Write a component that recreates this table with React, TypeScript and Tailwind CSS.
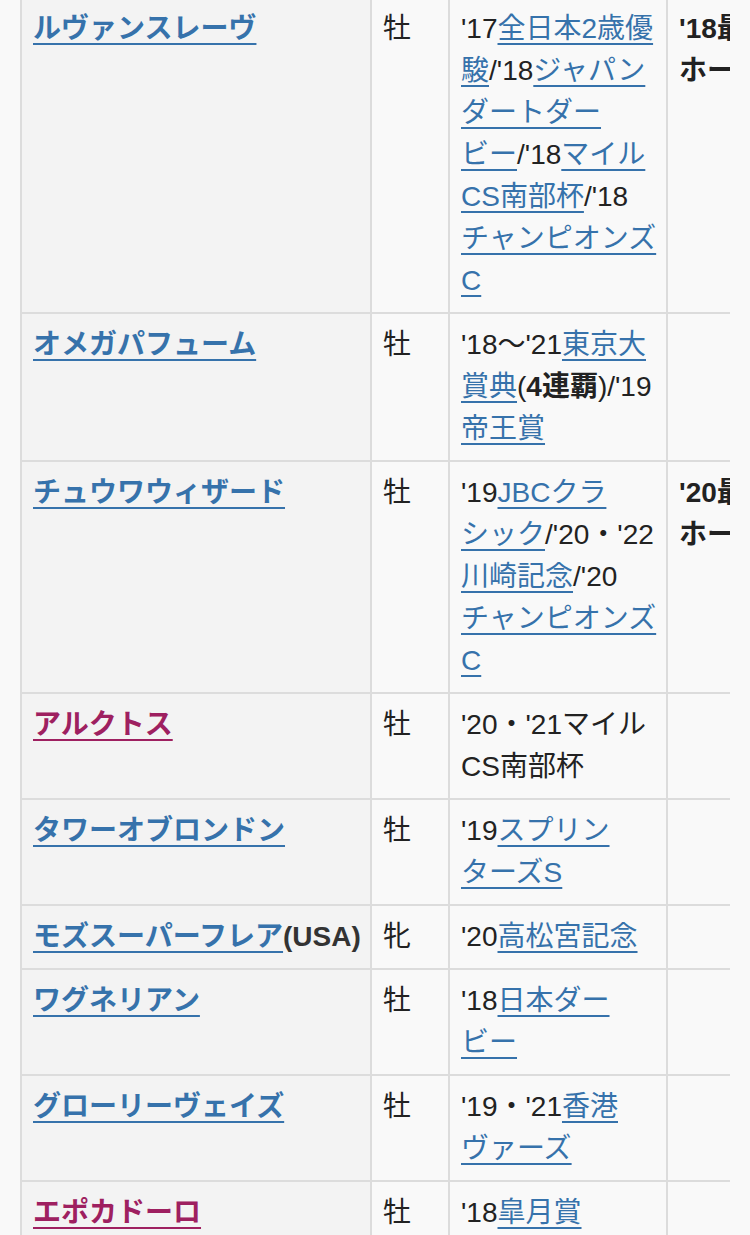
import React from "react";

type Seg = string | { l: string } | { b: string };
type Row = {
    name: string;
    red?: boolean;
    suffix?: string;
    sex: string;
    wins: Seg[][];
    award?: string[];
};

const rows: Row[] = [
    {
        name: "ルヴァンスレーヴ",
        sex: "牡",
        wins: [
            ["'17", { l: "全日本2歳優" }],
            [{ l: "駿" }, "/'18", { l: "ジャパン" }],
            [{ l: "ダートダー" }],
            [{ l: "ビー" }, "/'18", { l: "マイル" }],
            [{ l: "CS南部杯" }, "/'18"],
            [{ l: "チャンピオンズ" }],
            [{ l: "C" }],
        ],
        award: ["'18最優秀ダート", "ホース"],
    },
    {
        name: "オメガパフューム",
        sex: "牡",
        wins: [
            ["'18～'21", { l: "東京大" }],
            [{ l: "賞典" }, "(", { b: "4連覇" }, ")/'19"],
            [{ l: "帝王賞" }],
        ],
    },
    {
        name: "チュウワウィザード",
        sex: "牡",
        wins: [
            ["'19", { l: "JBCクラ" }],
            [{ l: "シック" }, "/'20・'22"],
            [{ l: "川崎記念" }, "/'20"],
            [{ l: "チャンピオンズ" }],
            [{ l: "C" }],
        ],
        award: ["'20最優秀ダート", "ホース"],
    },
    {
        name: "アルクトス",
        red: true,
        sex: "牡",
        wins: [["'20・'21マイル"], ["CS南部杯"]],
    },
    {
        name: "タワーオブロンドン",
        sex: "牡",
        wins: [["'19", { l: "スプリン" }], [{ l: "ターズS" }]],
    },
    {
        name: "モズスーパーフレア",
        suffix: "(USA)",
        sex: "牝",
        wins: [["'20", { l: "高松宮記念" }]],
    },
    {
        name: "ワグネリアン",
        sex: "牡",
        wins: [["'18", { l: "日本ダー" }], [{ l: "ビー" }]],
    },
    {
        name: "グローリーヴェイズ",
        sex: "牡",
        wins: [["'19・'21", { l: "香港" }], [{ l: "ヴァーズ" }]],
    },
    {
        name: "エポカドーロ",
        red: true,
        sex: "牡",
        wins: [["'18", { l: "皐月賞" }], [{ l: "" }]],
    },
];

const link = "text-[#3672ab] underline decoration-[2px] underline-offset-[5px]";
const cell = "align-top border-r-2 border-b-2 border-[#dcdcdc] px-[11px] py-[10px] whitespace-nowrap";

function Segment({ s }: { s: Seg }) {
    if (typeof s === "string") return <span>{s}</span>;
    if ("l" in s) return <span className={link}>{s.l}</span>;
    return <span className="font-bold">{s.b}</span>;
}

export default function App() {
    return (
        <div
            className="min-h-screen w-[750px] h-[1235px] overflow-hidden bg-[#f9f9f9] text-[#222222] text-[28px] leading-[42px]"
            style={{ fontFamily: '"Liberation Sans", "Noto Sans CJK JP", sans-serif' }}
        >
            <div className="ml-[20px] w-[710px] -mt-[4px] overflow-hidden">
                <table className="table-fixed border-separate border-spacing-0 border-l-2 border-t-2 border-[#dcdcdc] w-[948px]">
                    <colgroup>
                        <col className="w-[350px]" />
                        <col className="w-[78px]" />
                        <col className="w-[218px]" />
                        <col className="w-[300px]" />
                    </colgroup>
                    <tbody>
                        {rows.map((r) => (
                            <tr key={r.name}>
                                <th className={`${cell} bg-[#f3f3f3] text-left font-bold`}>
                                    <span
                                        className={
                                            r.red
                                                ? "text-[#9e2060] underline decoration-[2px] underline-offset-[5px]"
                                                : link
                                        }
                                    >
                                        {r.name}
                                    </span>
                                    {r.suffix && <span className="text-[#333333]">{r.suffix}</span>}
                                </th>
                                <td className={`${cell} bg-[#f9f9f9]`}>{r.sex}</td>
                                <td className={`${cell} bg-[#f9f9f9]`}>
                                    {r.wins.map((line, i) => (
                                        <div key={i}>
                                            {line.map((s, j) => (
                                                <Segment key={j} s={s} />
                                            ))}
                                        </div>
                                    ))}
                                </td>
                                <td className={`${cell} bg-[#f9f9f9] font-bold`}>
                                    {r.award?.map((a) => (
                                        <div key={a}>{a}</div>
                                    ))}
                                </td>
                            </tr>
                        ))}
                    </tbody>
                </table>
            </div>
        </div>
    );
}
